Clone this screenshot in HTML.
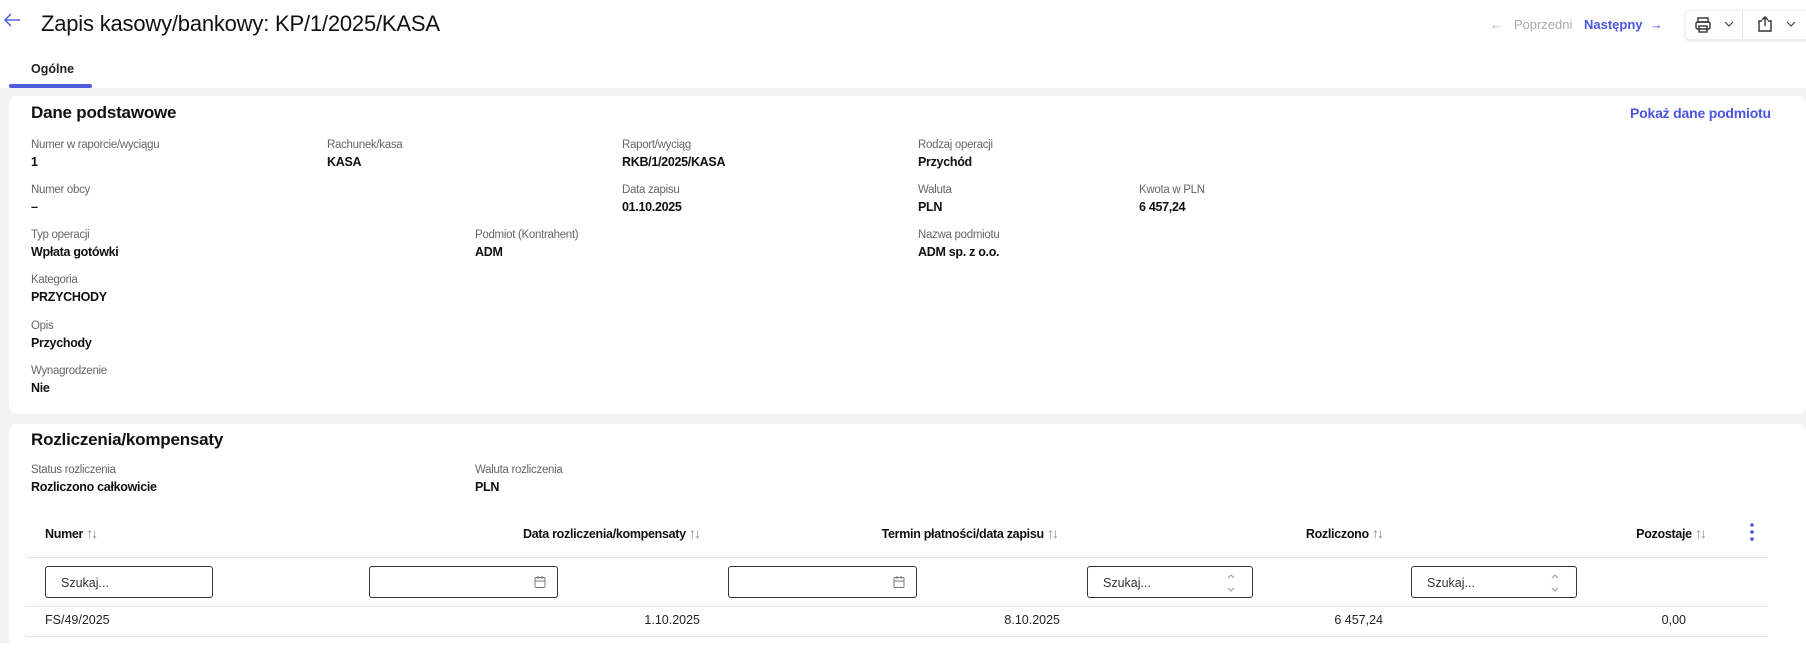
<!DOCTYPE html>
<html><head><meta charset="utf-8"><style>
*{box-sizing:border-box;margin:0;padding:0}
body{width:1806px;height:643px;overflow:hidden;background:#fff;font-family:"Liberation Sans",sans-serif;color:#111;position:relative}
.a{position:absolute;white-space:nowrap}
.gray{position:absolute;left:0;top:88px;width:1806px;height:555px;background:#f2f2f2}
.card{position:absolute;background:#fff;border-radius:8px}
.lb{font-size:11.5px;color:#666;letter-spacing:-0.3px}
.v{font-size:12.5px;font-weight:bold;letter-spacing:-0.3px}
.h{font-size:17px;font-weight:bold;letter-spacing:-0.2px}
.th{font-size:12.5px;font-weight:bold;letter-spacing:-0.3px}
.th span{color:#888;font-weight:normal;font-size:14px;letter-spacing:-2px}
.in{position:absolute;height:32px;border:1px solid #333;border-radius:3px;background:#fff;font-size:12.5px;color:#333;padding:9px 0 0 15px}
.line{position:absolute;left:26px;width:1742px;height:1px;background:#e2e2f4}
.td{font-size:12.5px;color:#222}
</style></head><body>
<svg class="a" style="left:3px;top:12px" width="18" height="16" viewBox="0 0 18 16"><path d="M17 8H2M8 2L2 8l6 6" fill="none" stroke="#5560e0" stroke-width="1.5"/></svg>
<div class="a" style="left:41px;top:11px;font-size:22px;color:#111;letter-spacing:-0.2px">Zapis kasowy/bankowy: KP/1/2025/KASA</div>
<div class="a" style="left:1490px;top:17px;font-size:13px;color:#aaa">←&nbsp;&nbsp; Poprzedni</div>
<div class="a" style="left:1584px;top:17px;font-size:13px;color:#4a55e0;font-weight:bold">Następny <span style="font-weight:normal">&nbsp;→</span></div>
<div class="a" style="left:1685px;top:10px;width:125px;height:30px;border:1px solid #eee;border-radius:5px;box-shadow:0 1px 3px rgba(0,0,0,.12)"></div>
<div class="a" style="left:1742px;top:11px;width:1px;height:28px;background:#e4e4f0"></div>
<svg class="a" style="left:1694px;top:16px" width="18" height="18" viewBox="0 0 18 18" fill="none" stroke="#333" stroke-width="1.4"><rect x="4" y="2" width="10" height="4"/><rect x="2" y="6" width="14" height="7" rx="1.5"/><rect x="5" y="10" width="8" height="6"/></svg>
<svg class="a" style="left:1724px;top:21px" width="10" height="7"><path d="M1 1l4 4 4-4" fill="none" stroke="#444" stroke-width="1.2"/></svg>
<svg class="a" style="left:1756px;top:15px" width="18" height="18" viewBox="0 0 18 18" fill="none" stroke="#333" stroke-width="1.4"><path d="M6 6H3v10h12V6h-3M9 2v9M6 5l3-3 3 3"/></svg>
<svg class="a" style="left:1786px;top:21px" width="10" height="7"><path d="M1 1l4 4 4-4" fill="none" stroke="#444" stroke-width="1.2"/></svg>
<div class="a" style="left:31px;top:62px;font-size:12.5px;color:#222;font-weight:bold">Ogólne</div>
<div class="a" style="left:9px;top:84px;width:83px;height:4px;background:#4f5ce0;border-radius:2px"></div>
<div class="gray"></div>
<div class="card" style="left:9px;top:96px;width:1797px;height:318px"></div>
<div class="card" style="left:9px;top:424px;width:1797px;height:230px"></div>
<div class="a h" style="left:31px;top:103px">Dane podstawowe</div>
<div class="a" style="left:1630px;top:105px;font-size:14px;color:#4a55e0;font-weight:bold;letter-spacing:-0.2px">Pokaż dane podmiotu</div>

<div class="a lb" style="left:31px;top:139px">Numer w raporcie/wyciągu</div><div class="a v" style="left:31px;top:155px">1</div>
<div class="a lb" style="left:327px;top:139px">Rachunek/kasa</div><div class="a v" style="left:327px;top:155px">KASA</div>
<div class="a lb" style="left:622px;top:139px">Raport/wyciąg</div><div class="a v" style="left:622px;top:155px">RKB/1/2025/KASA</div>
<div class="a lb" style="left:918px;top:139px">Rodzaj operacji</div><div class="a v" style="left:918px;top:155px">Przychód</div>
<div class="a lb" style="left:31px;top:184px">Numer obcy</div><div class="a v" style="left:31px;top:200px">–</div>
<div class="a lb" style="left:622px;top:184px">Data zapisu</div><div class="a v" style="left:622px;top:200px">01.10.2025</div>
<div class="a lb" style="left:918px;top:184px">Waluta</div><div class="a v" style="left:918px;top:200px">PLN</div>
<div class="a lb" style="left:1139px;top:184px">Kwota w PLN</div><div class="a v" style="left:1139px;top:200px">6 457,24</div>
<div class="a lb" style="left:31px;top:229px">Typ operacji</div><div class="a v" style="left:31px;top:245px">Wpłata gotówki</div>
<div class="a lb" style="left:475px;top:229px">Podmiot (Kontrahent)</div><div class="a v" style="left:475px;top:245px">ADM</div>
<div class="a lb" style="left:918px;top:229px">Nazwa podmiotu</div><div class="a v" style="left:918px;top:245px">ADM sp. z o.o.</div>
<div class="a lb" style="left:31px;top:274px">Kategoria</div><div class="a v" style="left:31px;top:290px">PRZYCHODY</div>
<div class="a lb" style="left:31px;top:320px">Opis</div><div class="a v" style="left:31px;top:336px">Przychody</div>
<div class="a lb" style="left:31px;top:365px">Wynagrodzenie</div><div class="a v" style="left:31px;top:381px">Nie</div>

<div class="a h" style="left:31px;top:430px">Rozliczenia/kompensaty</div>
<div class="a lb" style="left:31px;top:464px">Status rozliczenia</div><div class="a v" style="left:31px;top:480px">Rozliczono całkowicie</div>
<div class="a lb" style="left:475px;top:464px">Waluta rozliczenia</div><div class="a v" style="left:475px;top:480px">PLN</div>

<div class="a th" style="left:45px;top:525px">Numer <span>↑↓</span></div>
<div class="a th" style="right:1107px;top:525px">Data rozliczenia/kompensaty <span>↑↓</span></div>
<div class="a th" style="right:749px;top:525px">Termin płatności/data zapisu <span>↑↓</span></div>
<div class="a th" style="right:424px;top:525px">Rozliczono <span>↑↓</span></div>
<div class="a th" style="right:101px;top:525px">Pozostaje <span>↑↓</span></div>
<svg class="a" style="left:1749px;top:522px" width="6" height="20"><circle cx="3" cy="3" r="1.8" fill="#4a55e0"/><circle cx="3" cy="10" r="1.8" fill="#4a55e0"/><circle cx="3" cy="17" r="1.8" fill="#4a55e0"/></svg>
<div class="line" style="top:557px"></div>
<div class="in" style="left:45px;top:566px;width:168px">Szukaj...</div>
<div class="in" style="left:369px;top:566px;width:189px"></div>
<div class="in" style="left:728px;top:566px;width:189px"></div>
<svg class="a" style="left:534px;top:575px" width="12" height="14" fill="none" stroke="#777" stroke-width="1"><rect x="1" y="2.5" width="10" height="10" rx="1"/><path d="M1 6h10M4 1v3M8 1v3"/></svg>
<svg class="a" style="left:893px;top:575px" width="12" height="14" fill="none" stroke="#777" stroke-width="1"><rect x="1" y="2.5" width="10" height="10" rx="1"/><path d="M1 6h10M4 1v3M8 1v3"/></svg>
<div class="in" style="left:1087px;top:566px;width:166px">Szukaj...</div>
<div class="in" style="left:1411px;top:566px;width:166px">Szukaj...</div>
<svg class="a" style="left:1226px;top:572px" width="10" height="22" fill="none" stroke="#999" stroke-width="1"><path d="M2 6l3-3 3 3M2 16l3 3 3-3"/></svg>
<svg class="a" style="left:1550px;top:572px" width="10" height="22" fill="none" stroke="#999" stroke-width="1"><path d="M2 6l3-3 3 3M2 16l3 3 3-3"/></svg>
<div class="line" style="top:606px"></div>
<div class="a td" style="left:45px;top:613px">FS/49/2025</div>
<div class="a td" style="right:1106px;top:613px">1.10.2025</div>
<div class="a td" style="right:746px;top:613px">8.10.2025</div>
<div class="a td" style="right:423px;top:613px">6 457,24</div>
<div class="a td" style="right:120px;top:613px">0,00</div>
<div class="line" style="top:636px"></div>
</body></html>
